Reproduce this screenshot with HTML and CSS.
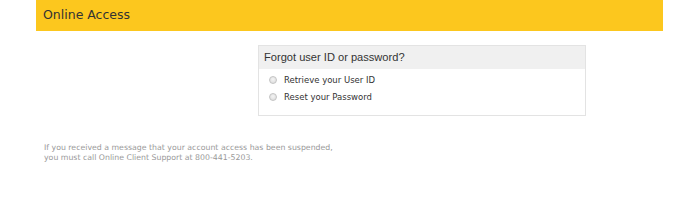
FILE: index.html
```html
<!DOCTYPE html>
<html>
<head>
  <meta charset="UTF-8" />
  <title>Online Access</title>
  <link rel="stylesheet" href="styles.css">
</head>
<body>
  <div class="page">
    <h1 class="banner">Online Access</h1>

    <div class="forgot">
      <h2>Forgot user ID or password?</h2>
      <form class="choices">
        <label><input type="radio" name="what"> Retrieve your User ID</label>
        <label><input type="radio" name="what"> Reset your Password</label>
      </form>
    </div>

    <p class="notice">
      If you received a message that your account access has been suspended,<br>
      you must call Online Client Support at 800-441-5203.
    </p>
  </div>
</body>
</html>
```

FILE: styles.css
```css
* {
  box-sizing: border-box;
}

body {
  margin: 0;
  background: #fff;
  font-family: "DejaVu Sans", Verdana, sans-serif;
}

.page {
  width: 627px;
  margin-left: 36px;
}

.banner {
  margin: 0;
  height: 31px;
  padding: 7px 0 0 7px;
  background: #fcc71e;
  color: #333;
  font-size: 12.5px;
  font-weight: normal;
}

.forgot {
  width: 328px;
  margin: 14px 0 0 222px;
  border: 1px solid #e3e3e3;
  padding-bottom: 11px;
}

.forgot h2 {
  margin: 0;
  height: 23px;
  padding: 5px 0 0 5px;
  background: #f0f0f0;
  font-family: "Liberation Sans", Arial, sans-serif;
  font-size: 11.1px;
  font-weight: normal;
  color: #333;
}

.choices {
  display: flex;
  flex-direction: column;
  gap: 3px;
  padding: 4px 0 0 10px;
}

.choices label {
  display: flex;
  align-items: center;
  gap: 7px;
  height: 14px;
  font-size: 8.5px;
  color: #333;
}

.choices input {
  appearance: none;
  margin: 0;
  width: 8px;
  height: 8px;
  border: 1px solid #c4c4c4;
  border-radius: 50%;
  background: radial-gradient(circle at 50% 40%, #f4f4f4, #d8d8d8);
}

.notice {
  margin: 27px 0 0 8px;
  font-size: 7.8px;
  line-height: 10px;
  color: #999;
}
```
